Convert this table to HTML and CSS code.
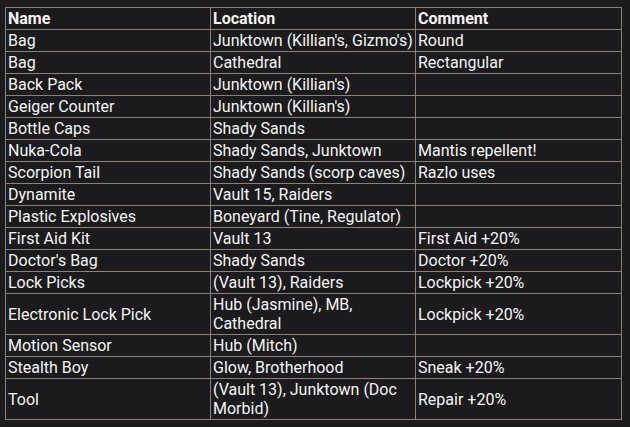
FILE: index.html
```html
<!DOCTYPE html>
<html>
<head>
<meta charset="utf-8">
<link rel="stylesheet" href="styles.css">
</head>
<body>
<table class="items">
<colgroup><col class="c1"><col class="c2"><col class="c3"></colgroup>
<thead>
<tr><th>Name</th><th>Location</th><th>Comment</th></tr>
</thead>
<tbody>
<tr><td>Bag</td><td>Junktown (Killian's, Gizmo's)</td><td>Round</td></tr>
<tr><td>Bag</td><td>Cathedral</td><td>Rectangular</td></tr>
<tr><td>Back Pack</td><td>Junktown (Killian's)</td><td></td></tr>
<tr><td>Geiger Counter</td><td>Junktown (Killian's)</td><td></td></tr>
<tr><td>Bottle Caps</td><td>Shady Sands</td><td></td></tr>
<tr><td>Nuka-Cola</td><td>Shady Sands, Junktown</td><td>Mantis repellent!</td></tr>
<tr><td>Scorpion Tail</td><td>Shady Sands (scorp caves)</td><td>Razlo uses</td></tr>
<tr><td>Dynamite</td><td>Vault 15, Raiders</td><td></td></tr>
<tr><td>Plastic Explosives</td><td>Boneyard (Tine, Regulator)</td><td></td></tr>
<tr><td>First Aid Kit</td><td>Vault 13</td><td>First Aid +20%</td></tr>
<tr><td>Doctor's Bag</td><td>Shady Sands</td><td>Doctor +20%</td></tr>
<tr><td>Lock Picks</td><td>(Vault 13), Raiders</td><td>Lockpick +20%</td></tr>
<tr><td>Electronic Lock Pick</td><td>Hub (Jasmine), MB, Cathedral</td><td>Lockpick +20%</td></tr>
<tr><td>Motion Sensor</td><td>Hub (Mitch)</td><td></td></tr>
<tr><td>Stealth Boy</td><td>Glow, Brotherhood</td><td>Sneak +20%</td></tr>
<tr><td>Tool</td><td>(Vault 13), Junktown (Doc Morbid)</td><td>Repair +20%</td></tr>
</tbody>
</table>
</body>
</html>
```
FILE: styles.css
```css
html, body {
  margin: 0;
  padding: 0;
  background: #1b1b1d;
}
body {
  padding: 7px 0 0 5px;
  font-family: Roboto, "Liberation Sans", sans-serif;
  font-size: 16px;
  color: #f4f4f4;
}
.items {
  border-collapse: collapse;
  table-layout: fixed;
  width: 616px;
}
.c1 { width: 205px; }
.c2 { width: 205px; }
.c3 { width: 206px; }
.items th, .items td {
  border: 1px solid #8a8279;
  padding: 1px 2px;
  line-height: 19px;
  text-align: left;
  vertical-align: middle;
}
.items th {
  font-weight: bold;
}
.items td:empty::after {
  content: "\00a0";
}
```
